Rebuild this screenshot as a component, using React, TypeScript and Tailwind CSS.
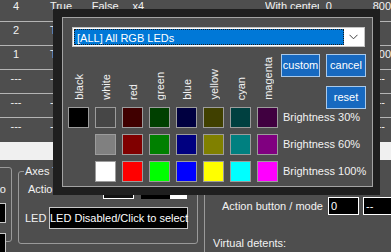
import React from "react";

const rows: string[][] = [
  ["4", "True", "False", "x4", "With center", "0", "800"],
  ["2", "True", "False", "x4", "With center", "0", ""],
  ["1", "True", "False", "x4", "With center", "0", "800"],
  ["---", "---", "---", "---", "---", "---", "---"],
  ["---", "---", "---", "---", "---", "---", "---"],
  ["---", "---", "---", "---", "---", "---", "---"],
];

const labels = ["black", "white", "red", "green", "blue", "yellow", "cyan", "magenta"];

const swatchRows: (string | null)[][] = [
  ["#000000", "#464646", "#400000", "#004000", "#000040", "#404000", "#004040", "#400040"],
  [null, "#808080", "#800000", "#008000", "#000080", "#808000", "#008080", "#800080"],
  [null, "#ffffff", "#ff0000", "#00ff00", "#0000ff", "#ffff00", "#00ffff", "#ff00ff"],
];

const brightness = ["Brightness 30%", "Brightness 60%", "Brightness 100%"];

function Btn({ children, w }: { children: React.ReactNode; w: string }) {
  return (
    <div
      className={`${w} h-[23px] shrink-0 bg-[#1769c0] border border-[#a9c9ea] flex items-center justify-center text-white leading-none`}
    >
      {children}
    </div>
  );
}

export default function App() {
  return (
    <div className="relative w-[391px] h-[252px] overflow-hidden bg-[#4e4e4e] text-[#f2f2f2] text-[11px] font-['Liberation_Sans',Arial,sans-serif]">
      {/* background table */}
      <div className="mt-[-2px]">
        {rows.map((r, i) => (
          <div
            key={i}
            className={`flex h-[24px] pt-[1px] leading-[14px] whitespace-nowrap ${
              i < 5 ? "border-b border-[#b4b4b4]" : ""
            }`}
          >
            <div className="w-[32px] mr-[18px] text-center">{r[0]}</div>
            <div className="w-[42px]">{r[1]}</div>
            <div className="w-[41px]">{r[2]}</div>
            <div className="w-[133px]">{r[3]}</div>
            <div className="w-[61px]">
              <div className="w-[54px] overflow-hidden">{r[4]}</div>
            </div>
            <div className="w-[47px]">{r[5]}</div>
            <div className="flex-1">{r[6]}</div>
          </div>
        ))}
      </div>
      {/* light band */}
      <div className="h-[18px] bg-[#f0f0f0]" />

      {/* lower panel */}
      <div className="flex items-start pt-[4px] leading-[14px] whitespace-nowrap">
        {/* left group (mostly off-screen) */}
        <div className="ml-[-68px] mt-[3px] w-[80px] h-[75px] shrink-0 border border-[#9a9a9a] rounded-[3px] flex flex-col items-end pr-[5px]">
          <div className="mt-[14px]">Auto</div>
          <div className="mt-[7px] w-[30px] h-[20px] shrink-0 bg-black border border-[#c8c8c8]" />
          <div className="mt-[10px] w-[30px] h-[20px] shrink-0 bg-black border border-[#c8c8c8]" />
        </div>

        {/* Axes group */}
        <fieldset className="ml-[6px] w-[180px] h-[80px] shrink-0 border border-[#9a9a9a] rounded-[3px]">
          <legend className="ml-[5px] px-[1px] leading-[14px]">Axes Treatment</legend>
          <div className="flex items-center h-[20px] mt-[1px] pl-[9px]">
            <div className="w-[75px]">Action</div>
            <div className="w-[31px] h-[20px] bg-[#111] border border-white" />
            <div className="ml-[7px] flex h-[20px]">
              <div className="w-[29px] bg-black" />
              <div className="w-[17px] bg-white" />
            </div>
          </div>
          <div className="flex items-center mt-[8px] pl-[6px]">
            <div className="w-[24px]">LED</div>
            <div className="w-[139px] h-[22px] bg-black border border-[#c8c8c8] flex items-center text-white">
              LED Disabled/Click to select
            </div>
          </div>
        </fieldset>

        {/* right group */}
        <div className="ml-[6px] w-[220px] h-[120px] mt-[7px] shrink-0 border border-[#9a9a9a] border-t-transparent rounded-[3px]">
          <div className="flex items-center h-[18px] mt-[25px] pl-[17px]">
            <div className="w-[106px]">Action button / mode</div>
            <div className="w-[31px] h-[18px] bg-black border border-white flex items-center pl-[2px] text-white">0</div>
            <div className="ml-[4px] w-[40px] h-[18px] bg-black border border-white flex items-center pl-[2px] text-white">--</div>
          </div>
          <div className="mt-[21px] pl-[8px]">Virtual detents:</div>
        </div>
      </div>

      {/* color dialog overlay */}
      <div className="absolute left-[53px] top-[9px] w-[327px] h-[186px] bg-[#1f1f1f] pl-[9px] pt-[8px] pr-[7px] pb-[8px]">
        <div className="h-full border border-[#a3a3a3] bg-[#4e4e4e] flex flex-col">
          {/* select */}
          <div className="mt-[9px] ml-[9px] mr-[7px] h-[20px] shrink-0 border border-[#c4c4c4] bg-white flex p-[1px]">
            <div className="flex-1 bg-[#0078d7] border border-dotted border-[#1a1a1a] text-white leading-[16px] pl-[2px] whitespace-nowrap">
              [ALL] All RGB LEDs
            </div>
            <div className="w-[19px] flex items-center justify-center">
              <svg width="9" height="6" viewBox="0 0 9 6">
                <polyline points="0.5,0.8 4.5,4.8 8.5,0.8" fill="none" stroke="#444" strokeWidth="1" />
              </svg>
            </div>
          </div>

          {/* grid */}
          <div className="mt-[7px] ml-[5px] grid grid-cols-[21px_21px_21px_21px_21px_21px_21px_21px_82px] grid-rows-[47px_21px_21px_21px] gap-x-[6px] gap-y-[6px]">
            {labels.map((l) => (
              <div key={l} className="flex items-end justify-center pb-[1px]">
                <span className="[writing-mode:vertical-rl] rotate-180 leading-[12px] whitespace-nowrap">{l}</span>
              </div>
            ))}
            <div className="flex flex-col items-end">
              <div className="flex gap-[6px]">
                <Btn w="w-[39px]">custom</Btn>
                <Btn w="w-[40px]">cancel</Btn>
              </div>
              <div className="mt-[9px]">
                <Btn w="w-[40px]">reset</Btn>
              </div>
            </div>
            {swatchRows.map((row, ri) => (
              <React.Fragment key={ri}>
                {row.map((c, ci) =>
                  c ? (
                    <div key={ci} className="border border-[#9c9c9c]" style={{ backgroundColor: c }} />
                  ) : (
                    <div key={ci} />
                  )
                )}
                <div className="flex items-center ml-[-1px] whitespace-nowrap">{brightness[ri]}</div>
              </React.Fragment>
            ))}
          </div>
        </div>
      </div>
    </div>
  );
}
